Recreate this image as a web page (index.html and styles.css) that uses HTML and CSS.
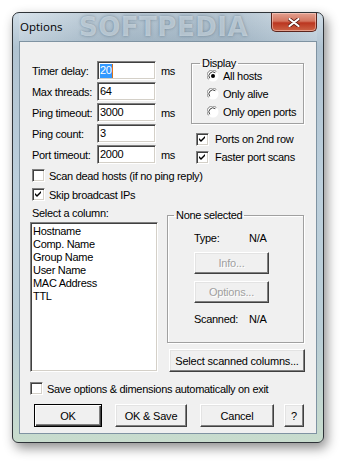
FILE: index.html
```html
<!DOCTYPE html>
<html lang="en">
<head>
    <meta charset="UTF-8">
    <meta name="viewport" content="width=device-width, initial-scale=1.0">
    <title>Options</title>
    <link rel="stylesheet" href="styles.css">
</head>
<body>
    <div class="stage">
        <div class="window">
            <div class="titlebar">
                <span class="title">Options</span>
                <span class="watermark">SOFTPEDIA</span>
                <div class="close">
                    <svg width="12" height="9" viewBox="0 0 12 9">
                        <path d="M1.5 1 L10.5 8 M10.5 1 L1.5 8" stroke="#5a1a12" stroke-width="3.6" stroke-linecap="round"/>
                        <path d="M1.5 1 L10.5 8 M10.5 1 L1.5 8" stroke="#ffffff" stroke-width="2.2" stroke-linecap="round"/>
                    </svg>
                </div>
            </div>

            <div class="client">
                <div class="top">
                    <div class="fields">
                        <div class="row">
                            <span class="label">Timer delay:</span>
                            <span class="edit"><span class="sel">20</span><span class="caret"></span></span>
                            <span class="unit">ms</span>
                        </div>
                        <div class="row">
                            <span class="label">Max threads:</span>
                            <span class="edit">64</span>
                        </div>
                        <div class="row">
                            <span class="label">Ping timeout:</span>
                            <span class="edit">3000</span>
                            <span class="unit">ms</span>
                        </div>
                        <div class="row">
                            <span class="label">Ping count:</span>
                            <span class="edit">3</span>
                        </div>
                        <div class="row">
                            <span class="label">Port timeout:</span>
                            <span class="edit">2000</span>
                            <span class="unit">ms</span>
                        </div>
                    </div>

                    <div class="side">
                        <fieldset class="group display">
                            <legend>Display</legend>
                            <div class="radios">
                                <div class="opt">
                                    <svg class="radio" width="12" height="12" viewBox="0 0 12 12">
                                        <circle cx="6" cy="6" r="5.5" fill="#fff"/>
                                        <path d="M1.6 9.4 A5 5 0 0 1 9.4 1.6" stroke="#808080" fill="none"/>
                                        <path d="M2.7 8.3 A4 4 0 0 1 8.3 2.7" stroke="#404040" fill="none"/>
                                        <circle cx="6" cy="6" r="2" fill="#000"/>
                                    </svg>
                                    All hosts
                                </div>
                                <div class="opt">
                                    <svg class="radio" width="12" height="12" viewBox="0 0 12 12">
                                        <circle cx="6" cy="6" r="5.5" fill="#fff"/>
                                        <path d="M1.6 9.4 A5 5 0 0 1 9.4 1.6" stroke="#808080" fill="none"/>
                                        <path d="M2.7 8.3 A4 4 0 0 1 8.3 2.7" stroke="#404040" fill="none"/>
                                    </svg>
                                    Only alive
                                </div>
                                <div class="opt">
                                    <svg class="radio" width="12" height="12" viewBox="0 0 12 12">
                                        <circle cx="6" cy="6" r="5.5" fill="#fff"/>
                                        <path d="M1.6 9.4 A5 5 0 0 1 9.4 1.6" stroke="#808080" fill="none"/>
                                        <path d="M2.7 8.3 A4 4 0 0 1 8.3 2.7" stroke="#404040" fill="none"/>
                                    </svg>
                                    Only open ports
                                </div>
                            </div>
                        </fieldset>
                        <div class="side-checks">
                            <div class="check">
                                <span class="box"><svg width="11" height="11" viewBox="0 0 11 11"><path d="M2 4 V6 L4 8 L8 4 V2 L4 6 Z" fill="#000"/></svg></span>
                                Ports on 2nd row
                            </div>
                            <div class="check">
                                <span class="box"><svg width="11" height="11" viewBox="0 0 11 11"><path d="M2 4 V6 L4 8 L8 4 V2 L4 6 Z" fill="#000"/></svg></span>
                                Faster port scans
                            </div>
                        </div>
                    </div>
                </div>

                <div class="check wide">
                    <span class="box"></span>
                    Scan dead hosts (if no ping reply)
                </div>
                <div class="check wide">
                    <span class="box"><svg width="11" height="11" viewBox="0 0 11 11"><path d="M2 4 V6 L4 8 L8 4 V2 L4 6 Z" fill="#000"/></svg></span>
                    Skip broadcast IPs
                </div>

                <div class="bottom">
                    <div class="columns">
                        <div class="caption">Select a column:</div>
                        <div class="listbox">
                            <div>Hostname</div>
                            <div>Comp. Name</div>
                            <div>Group Name</div>
                            <div>User Name</div>
                            <div>MAC Address</div>
                            <div>TTL</div>
                        </div>
                    </div>
                    <div class="details">
                        <fieldset class="group selected">
                            <legend>None selected</legend>
                            <div class="info">
                                <div class="pair"><span>Type:</span><span>N/A</span></div>
                                <div class="btn disabled small">Info...</div>
                                <div class="btn disabled small">Options...</div>
                                <div class="pair scanned"><span>Scanned:</span><span>N/A</span></div>
                            </div>
                        </fieldset>
                        <div class="btn scan">Select scanned columns...</div>
                    </div>
                </div>

                <div class="check save">
                    <span class="box"></span>
                    Save options &amp; dimensions automatically on exit
                </div>

                <div class="actions">
                    <div class="btn default ok">OK</div>
                    <div class="btn oksave">OK &amp; Save</div>
                    <div class="btn cancel">Cancel</div>
                    <div class="btn help">?</div>
                </div>
            </div>
        </div>
    </div>
</body>
</html>
```

FILE: styles.css
```css
body {
    margin: 0;
    background-color: #ffffff;
    font-family: 'Liberation Sans', Arial, sans-serif;
    font-size: 11px;
    letter-spacing: -0.3px;
    color: #000;
}
.stage {
    padding: 12px 20px 20px 12px;
}
.window {
    width: 312px;
    height: 431px;
    box-sizing: border-box;
    border: 1px solid #2e3338;
    border-radius: 7px 7px 6px 6px;
    padding: 0 6px 8px 6px;
    background: linear-gradient(180deg, #d0dde7 0%, #b0c3d1 8%, #bccfdc 40%, #b9cdd6 75%, #c8dccd 100%);
    box-shadow: 3px 5px 12px rgba(0, 0, 0, 0.45);
}
.titlebar {
    position: relative;
    height: 28px;
    display: flex;
    justify-content: space-between;
    align-items: flex-start;
    background: linear-gradient(90deg, rgba(255, 255, 255, 0.15) 0%, rgba(80, 105, 125, 0.18) 30%, rgba(80, 105, 125, 0.22) 70%, rgba(255, 255, 255, 0.1) 100%);
}
.title {
    font-family: 'Open Sans', sans-serif;
    font-size: 11.5px;
    letter-spacing: 0;
    line-height: 28px;
    padding-left: 1px;
    color: #000;
    z-index: 1;
}
.watermark {
    position: absolute;
    left: 60px;
    top: 0;
    font-family: 'DejaVu Sans', sans-serif;
    font-weight: bold;
    font-size: 26px;
    letter-spacing: 0.5px;
    line-height: 28px;
    color: rgba(225, 235, 242, 0.6);
    text-shadow: 0 0 3px rgba(60, 85, 105, 0.55);
}
.close {
    width: 46px;
    height: 19px;
    box-sizing: border-box;
    border: 1px solid #5b241c;
    border-top: none;
    border-radius: 0 0 5px 5px;
    background: linear-gradient(180deg, #e3a191 0%, #d4755f 45%, #bb3620 55%, #cc6446 100%);
    box-shadow: inset 0 0 0 1px rgba(255, 220, 210, 0.5);
    display: flex;
    align-items: center;
    justify-content: center;
    z-index: 1;
}
.client {
    height: 393px;
    box-sizing: border-box;
    border: 1px solid #7f93a2;
    background-color: #f0f0f0;
    padding: 15px 12px 0 12px;
}
.top {
    display: flex;
    align-items: flex-start;
}
.fields {
    width: 159px;
    margin-top: 4px;
}
.row {
    display: flex;
    align-items: center;
    height: 19px;
    margin-bottom: 2px;
}
.label {
    width: 65px;
}
.edit {
    width: 59px;
    height: 19px;
    box-sizing: border-box;
    background-color: #fff;
    border: 1px solid;
    border-color: #808080 #ffffff #ffffff #808080;
    box-shadow: inset 1px 1px 0 #404040, inset -1px -1px 0 #d4d0c8;
    padding: 2px 0 0 2px;
    line-height: 13px;
    display: flex;
    align-items: flex-start;
}
.sel {
    background-color: #3399ff;
    color: #fff;
    height: 14px;
}
.caret {
    width: 1px;
    height: 14px;
    background-color: #d8741c;
}
.unit {
    margin-left: 5px;
}
.side {
    width: 113px;
}
fieldset.group {
    margin: 0;
    padding: 0;
    min-width: 0;
    border: 1px solid #a0a0a0;
    box-shadow: 1px 1px 0 #ffffff, inset 1px 1px 0 #ffffff;
}
fieldset.group legend {
    padding: 0 2px;
    line-height: 13px;
}
.display legend {
    margin-left: 8px;
}
.radios {
    margin-top: -3px;
    padding: 0 0 2px 15px;
}
.opt {
    display: flex;
    align-items: center;
    gap: 4px;
    height: 18px;
}
.side-checks {
    margin-top: 6px;
    padding-left: 5px;
}
.side-checks .check {
    height: 18px;
    gap: 6px;
}
.check {
    display: flex;
    align-items: center;
    gap: 4px;
    height: 19px;
}
.box {
    width: 13px;
    height: 13px;
    box-sizing: border-box;
    background-color: #fff;
    border: 1px solid;
    border-color: #808080 #ffffff #ffffff #808080;
    box-shadow: inset 1px 1px 0 #404040, inset -1px -1px 0 #d4d0c8;
    display: flex;
    flex-shrink: 0;
}
.bottom {
    display: flex;
    margin-top: 3px;
    align-items: flex-start;
}
.columns {
    width: 135px;
}
.caption {
    line-height: 13px;
}
.listbox {
    width: 128px;
    height: 150px;
    box-sizing: border-box;
    margin: 2px 0 0 -2px;
    background-color: #fff;
    border: 1px solid;
    border-color: #808080 #ffffff #ffffff #808080;
    box-shadow: inset 1px 1px 0 #404040, inset -1px -1px 0 #d4d0c8;
    padding: 2px 2px;
    line-height: 13px;
}
.details {
    width: 137px;
    margin-top: 2px;
}
.selected legend {
    margin-left: 6px;
}
.info {
    padding: 10px 0 16px 26px;
}
.pair {
    display: flex;
    line-height: 13px;
}
.pair span:first-child {
    width: 55px;
}
.scanned {
    margin-top: 10px;
}
.btn {
    height: 23px;
    box-sizing: border-box;
    background-color: #f0f0f0;
    border: 1px solid;
    border-color: #ffffff #404040 #404040 #ffffff;
    box-shadow: inset -1px -1px 0 #808080, inset 1px 1px 0 #e3e3e3;
    display: flex;
    align-items: center;
    justify-content: center;
    letter-spacing: -0.2px;
}
.btn.small {
    width: 75px;
    height: 22px;
    margin-top: 7px;
}
.btn.disabled {
    color: #a0a0a0;
    text-shadow: 1px 1px 0 #ffffff;
}
.btn.scan {
    width: 136px;
    margin: 6px 0 0 2px;
}
.btn.default {
    border-color: #000;
    box-shadow: inset 1px 1px 0 #ffffff, inset -1px -1px 0 #404040, inset -2px -2px 0 #808080;
}
.save {
    margin: 7px 0 0 -2px;
}
.actions {
    display: flex;
    margin: 6px 0 0 2px;
}
.ok {
    width: 68px;
    margin-right: 13px;
}
.oksave {
    width: 72px;
    margin-right: 13px;
}
.cancel {
    width: 74px;
    margin-right: 10px;
}
.help {
    width: 20px;
}
```
